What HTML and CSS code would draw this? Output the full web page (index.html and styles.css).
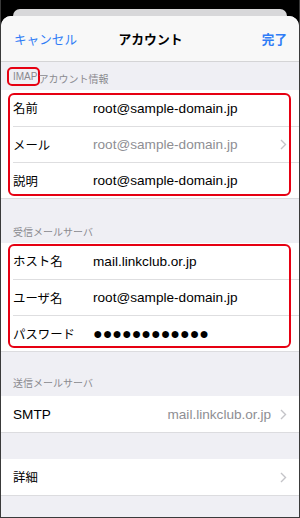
FILE: index.html
```html
<!DOCTYPE html>
<html lang="ja">
<head>
    <meta charset="UTF-8">
    <meta name="viewport" content="width=device-width, initial-scale=1.0">
    <title>アカウント</title>
    <link rel="stylesheet" href="styles.css">
</head>
<body>
    <div class="frame">
        <div class="back-card"></div>
        <div class="sheet">
            <header class="nav-bar">
                <span class="nav-btn">キャンセル</span>
                <h1 class="nav-title">アカウント</h1>
                <span class="nav-btn nav-btn--done">完了</span>
            </header>

            <!-- IMAP account -->
            <div class="section-head section-head--first"><span class="mark">IMAP</span>アカウント情報</div>
            <div class="group group--marked">
                <div class="row">
                    <span class="row-label">名前</span>
                    <span class="row-value">root@sample-domain.jp</span>
                </div>
                <div class="row">
                    <span class="row-label">メール</span>
                    <span class="row-value row-value--muted">root@sample-domain.jp</span>
                    <svg class="chevron" width="7" height="11" viewBox="0 0 7 11"><polyline points="1,1 5.5,5.5 1,10" fill="none" stroke="#c4c4c8" stroke-width="1.4"/></svg>
                </div>
                <div class="row">
                    <span class="row-label">説明</span>
                    <span class="row-value">root@sample-domain.jp</span>
                </div>
            </div>

            <!-- Incoming server -->
            <div class="section-head">受信メールサーバ</div>
            <div class="group group--marked group--marked-tight">
                <div class="row">
                    <span class="row-label">ホスト名</span>
                    <span class="row-value">mail.linkclub.or.jp</span>
                </div>
                <div class="row">
                    <span class="row-label">ユーザ名</span>
                    <span class="row-value">root@sample-domain.jp</span>
                </div>
                <div class="row">
                    <span class="row-label">パスワード</span>
                    <span class="row-value row-value--dots">●●●●●●●●●●●●</span>
                </div>
            </div>

            <!-- Outgoing server -->
            <div class="section-head section-head--low">送信メールサーバ</div>
            <div class="group">
                <div class="row">
                    <span class="row-label row-label--latin">SMTP</span>
                    <span class="row-value row-value--muted row-value--end">mail.linkclub.or.jp</span>
                    <svg class="chevron" width="7" height="11" viewBox="0 0 7 11"><polyline points="1,1 5.5,5.5 1,10" fill="none" stroke="#c4c4c8" stroke-width="1.4"/></svg>
                </div>
            </div>

            <div class="spacer"></div>
            <div class="group">
                <div class="row">
                    <span class="row-label">詳細</span>
                    <svg class="chevron chevron--end" width="7" height="11" viewBox="0 0 7 11"><polyline points="1,1 5.5,5.5 1,10" fill="none" stroke="#c4c4c8" stroke-width="1.4"/></svg>
                </div>
            </div>
        </div>
    </div>
</body>
</html>
```

FILE: styles.css
```css
/* Global */
* {
    margin: 0;
    padding: 0;
    box-sizing: border-box;
}

body {
    background: #000;
    font-family: "Liberation Sans", "Noto Sans CJK JP", sans-serif;
    color: #000;
}

/* Outer frame */
.frame {
    width: 300px;
    height: 518px;
    background: #000;
    border: 1px solid #3a3a3a;
    border-top: none;
    display: flex;
    flex-direction: column;
    overflow: hidden;
}

.back-card {
    height: 7px;
    margin: 9px 12px 0;
    background: #d8d8da;
    border-radius: 9px 9px 0 0;
}

.sheet {
    flex: 1;
    background: #efeff4;
    border-radius: 10px 10px 0 0;
    overflow: hidden;
}

/* Navigation bar */
.nav-bar {
    height: 46px;
    display: grid;
    grid-template-columns: 1fr auto 1fr;
    align-items: center;
    padding: 0 12px 1px 13px;
    background: #f8f8f8;
    border-bottom: 1px solid #d4d4d6;
}

.nav-btn {
    font-size: 12.6px;
    color: #2f7cf6;
}

.nav-btn--done {
    justify-self: end;
    font-weight: 700;
}

.nav-title {
    font-size: 12.8px;
    font-weight: 700;
}

/* Section headers */
.section-head {
    height: 44px;
    display: flex;
    align-items: flex-end;
    padding: 0 12px 4px;
    font-size: 10px;
    line-height: 13px;
    color: #8a8a8f;
}

.section-head--first {
    height: 28px;
}

.section-head--low {
    padding-bottom: 6px;
}

.mark {
    display: inline-block;
    margin: 0 -2px 0 -6px;
    padding: 1px 1px 1px 4px;
    border: 2px solid #e60012;
    border-radius: 5px;
}

/* Groups and rows */
.group {
    background: #fff;
    padding-left: 12px;
    border-bottom: 1px solid #dcdcdf;
}

.group--marked {
    position: relative;
}

.group--marked::after {
    content: "";
    position: absolute;
    top: 3px;
    right: 8px;
    bottom: 2px;
    left: 7px;
    border: 2px solid #e60012;
    border-radius: 6px;
    pointer-events: none;
}

.group--marked-tight::after {
    top: 1px;
    bottom: 3px;
}

.row {
    height: 36px;
    display: flex;
    align-items: center;
    padding-right: 12px;
    font-size: 13.6px;
}

.row + .row {
    border-top: 1px solid #dedee0;
}

.row-label {
    width: 80px;
    flex-shrink: 0;
    font-size: 12.4px;
}

.row-label--latin {
    font-size: 13.6px;
}

.row-value {
    flex: 1;
    white-space: nowrap;
}

.row-value--muted {
    color: #8e8e93;
}

.row-value--end {
    text-align: right;
    margin-right: 9px;
}

.row-value--dots {
    font-family: "Liberation Sans", "DejaVu Sans", sans-serif;
    font-size: 16px;
}

.chevron {
    flex-shrink: 0;
}

.chevron--end {
    margin-left: auto;
}

.spacer {
    height: 26px;
}
```
